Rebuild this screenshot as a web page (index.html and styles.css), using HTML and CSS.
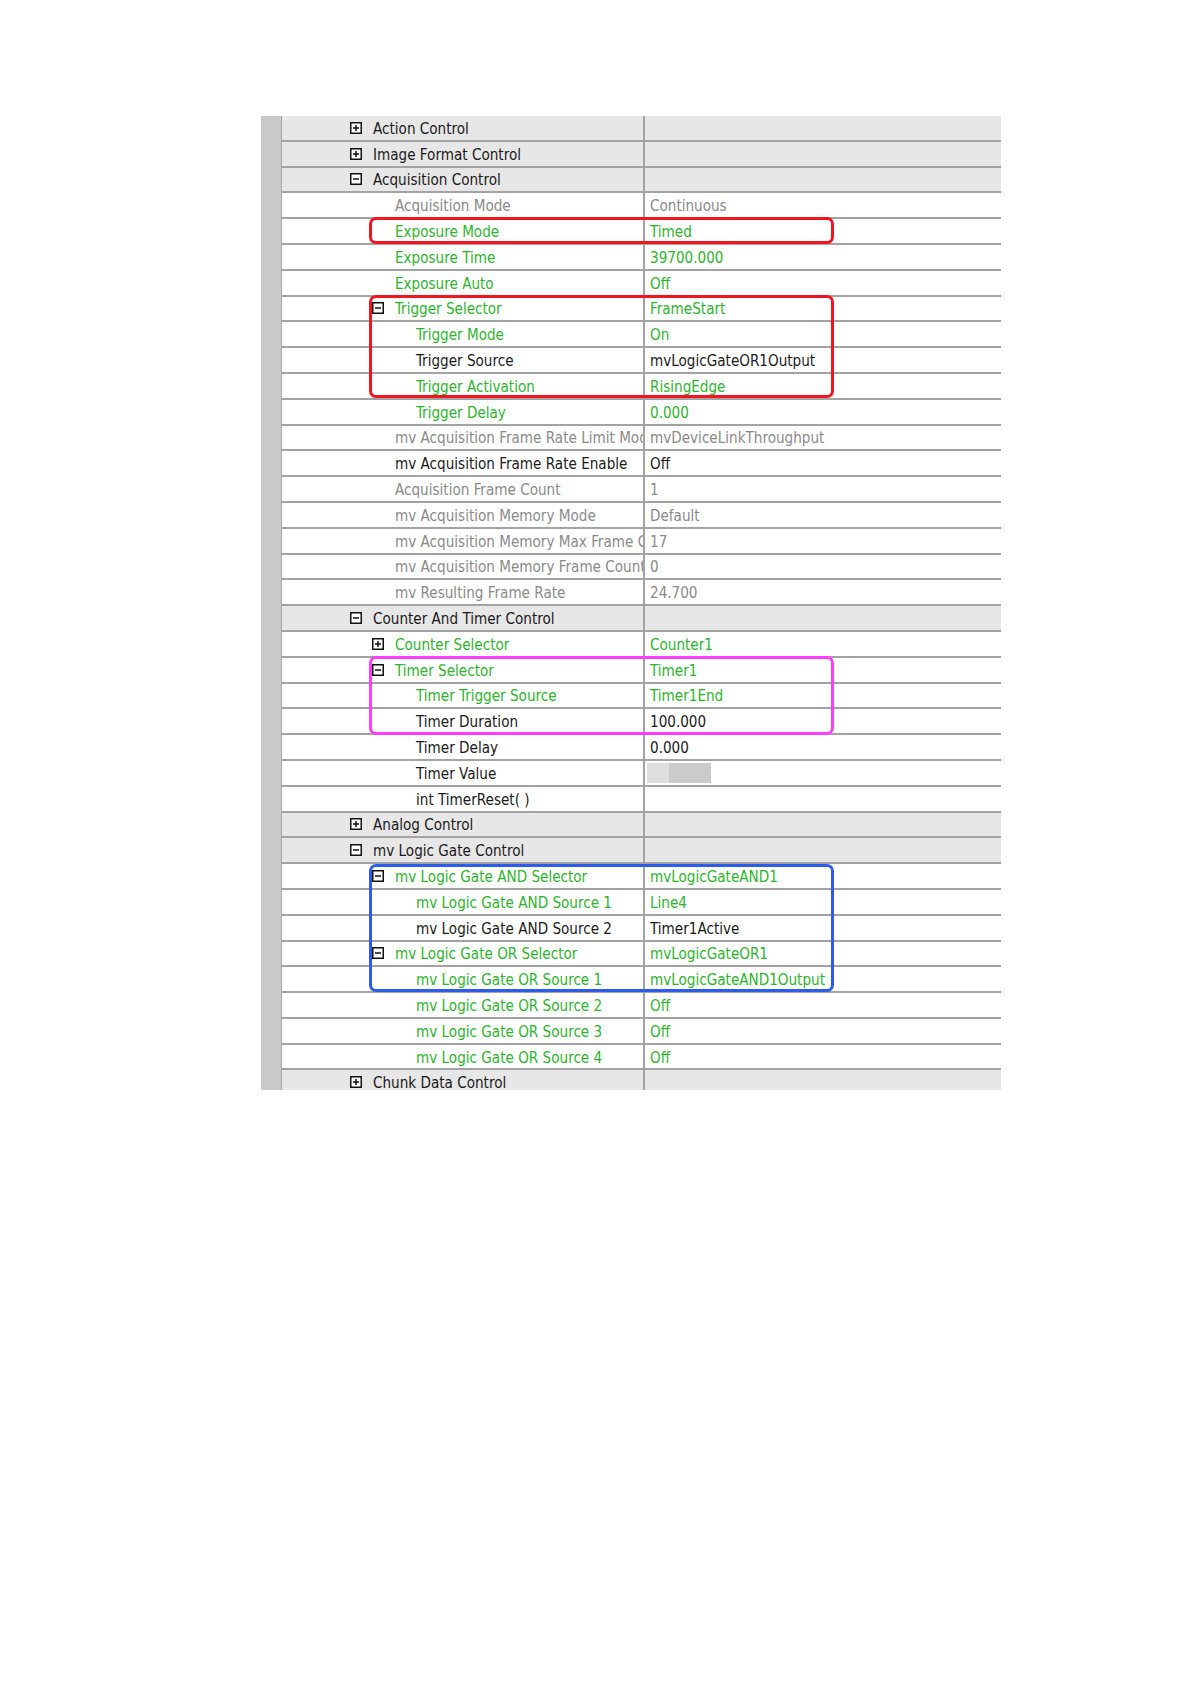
FILE: index.html
```html
<!DOCTYPE html>
<html>
<head>
<meta charset="utf-8">
<title>Property Grid</title>
<link rel="stylesheet" href="styles.css">
</head>
<body>
<div class="page">
  <div class="grid">
    <div class="gutter"></div>
    <div class="table">
      <div class="row group"><div class="name l0"><svg class="ico" viewBox="0 0 12 12"><rect x="0.75" y="0.75" width="10.5" height="10.5"/><path d="M3 6h6M6 3v6"/></svg><span>Action Control</span></div><div class="val"></div></div>
      <div class="row group"><div class="name l0"><svg class="ico" viewBox="0 0 12 12"><rect x="0.75" y="0.75" width="10.5" height="10.5"/><path d="M3 6h6M6 3v6"/></svg><span>Image Format Control</span></div><div class="val"></div></div>
      <div class="row group"><div class="name l0"><svg class="ico" viewBox="0 0 12 12"><rect x="0.75" y="0.75" width="10.5" height="10.5"/><path d="M3 6h6"/></svg><span>Acquisition Control</span></div><div class="val"></div></div>
      <div class="row gray"><div class="name l1">Acquisition Mode</div><div class="val">Continuous</div></div>
      <div class="row green"><div class="name l1">Exposure Mode</div><div class="val">Timed</div></div>
      <div class="row green"><div class="name l1">Exposure Time</div><div class="val">39700.000</div></div>
      <div class="row green"><div class="name l1">Exposure Auto</div><div class="val">Off</div></div>
      <div class="row green"><div class="name l1i"><svg class="ico" viewBox="0 0 12 12"><rect x="0.75" y="0.75" width="10.5" height="10.5"/><path d="M3 6h6"/></svg><span>Trigger Selector</span></div><div class="val">FrameStart</div></div>
      <div class="row green"><div class="name l2">Trigger Mode</div><div class="val">On</div></div>
      <div class="row black"><div class="name l2">Trigger Source</div><div class="val">mvLogicGateOR1Output</div></div>
      <div class="row green"><div class="name l2">Trigger Activation</div><div class="val">RisingEdge</div></div>
      <div class="row green"><div class="name l2">Trigger Delay</div><div class="val">0.000</div></div>
      <div class="row gray"><div class="name l1">mv Acquisition Frame Rate Limit Mode</div><div class="val">mvDeviceLinkThroughput</div></div>
      <div class="row black"><div class="name l1">mv Acquisition Frame Rate Enable</div><div class="val">Off</div></div>
      <div class="row gray"><div class="name l1">Acquisition Frame Count</div><div class="val">1</div></div>
      <div class="row gray"><div class="name l1">mv Acquisition Memory Mode</div><div class="val">Default</div></div>
      <div class="row gray"><div class="name l1">mv Acquisition Memory Max Frame Count</div><div class="val">17</div></div>
      <div class="row gray"><div class="name l1">mv Acquisition Memory Frame Count</div><div class="val">0</div></div>
      <div class="row gray"><div class="name l1">mv Resulting Frame Rate</div><div class="val">24.700</div></div>
      <div class="row group"><div class="name l0"><svg class="ico" viewBox="0 0 12 12"><rect x="0.75" y="0.75" width="10.5" height="10.5"/><path d="M3 6h6"/></svg><span>Counter And Timer Control</span></div><div class="val"></div></div>
      <div class="row green"><div class="name l1i"><svg class="ico" viewBox="0 0 12 12"><rect x="0.75" y="0.75" width="10.5" height="10.5"/><path d="M3 6h6M6 3v6"/></svg><span>Counter Selector</span></div><div class="val">Counter1</div></div>
      <div class="row green"><div class="name l1i"><svg class="ico" viewBox="0 0 12 12"><rect x="0.75" y="0.75" width="10.5" height="10.5"/><path d="M3 6h6"/></svg><span>Timer Selector</span></div><div class="val">Timer1</div></div>
      <div class="row green"><div class="name l2">Timer Trigger Source</div><div class="val">Timer1End</div></div>
      <div class="row black"><div class="name l2">Timer Duration</div><div class="val">100.000</div></div>
      <div class="row black"><div class="name l2">Timer Delay</div><div class="val">0.000</div></div>
      <div class="row black"><div class="name l2">Timer Value</div><div class="val"><span class="blank"><span class="blank-a"></span><span class="blank-b"></span></span></div></div>
      <div class="row black"><div class="name l2">int TimerReset( )</div><div class="val"></div></div>
      <div class="row group"><div class="name l0"><svg class="ico" viewBox="0 0 12 12"><rect x="0.75" y="0.75" width="10.5" height="10.5"/><path d="M3 6h6M6 3v6"/></svg><span>Analog Control</span></div><div class="val"></div></div>
      <div class="row group"><div class="name l0"><svg class="ico" viewBox="0 0 12 12"><rect x="0.75" y="0.75" width="10.5" height="10.5"/><path d="M3 6h6"/></svg><span>mv Logic Gate Control</span></div><div class="val"></div></div>
      <div class="row green"><div class="name l1i"><svg class="ico" viewBox="0 0 12 12"><rect x="0.75" y="0.75" width="10.5" height="10.5"/><path d="M3 6h6"/></svg><span>mv Logic Gate AND Selector</span></div><div class="val">mvLogicGateAND1</div></div>
      <div class="row green"><div class="name l2">mv Logic Gate AND Source 1</div><div class="val">Line4</div></div>
      <div class="row black"><div class="name l2">mv Logic Gate AND Source 2</div><div class="val">Timer1Active</div></div>
      <div class="row green"><div class="name l1i"><svg class="ico" viewBox="0 0 12 12"><rect x="0.75" y="0.75" width="10.5" height="10.5"/><path d="M3 6h6"/></svg><span>mv Logic Gate OR Selector</span></div><div class="val">mvLogicGateOR1</div></div>
      <div class="row green"><div class="name l2">mv Logic Gate OR Source 1</div><div class="val">mvLogicGateAND1Output</div></div>
      <div class="row green"><div class="name l2">mv Logic Gate OR Source 2</div><div class="val">Off</div></div>
      <div class="row green"><div class="name l2">mv Logic Gate OR Source 3</div><div class="val">Off</div></div>
      <div class="row green"><div class="name l2">mv Logic Gate OR Source 4</div><div class="val">Off</div></div>
      <div class="row group"><div class="name l0"><svg class="ico" viewBox="0 0 12 12"><rect x="0.75" y="0.75" width="10.5" height="10.5"/><path d="M3 6h6M6 3v6"/></svg><span>Chunk Data Control</span></div><div class="val"></div></div>
    </div>
    <div class="mark red box-exposure"></div>
    <div class="mark red box-trigger"></div>
    <div class="mark magenta box-timer"></div>
    <div class="mark blue box-logic"></div>
  </div>
</div>
</body>
</html>
```
FILE: styles.css
```css
html, body {
  margin: 0;
  padding: 0;
  background: #ffffff;
}

.page {
  padding-top: 116px;
  padding-left: 261px;
}

.grid {
  position: relative;
  width: 740px;
  height: 974px;
  overflow: hidden;
  display: flex;
  font-family: "DejaVu Sans Condensed", "DejaVu Sans", sans-serif;
  font-size: 15.1px;
}

.gutter {
  width: 20px;
  flex: none;
  background: #c9c9c9;
  border-right: 1px solid #a9a9a9;
}

.table {
  flex: 1;
  display: flex;
  flex-direction: column;
}

.row {
  flex: none;
  height: 25.8px;
  box-sizing: border-box;
  border-bottom: 2px solid #a3a3a3;
  display: flex;
  background: #ffffff;
}

.row.group {
  background: #e7e7e7;
  color: #1a1a1a;
}

.row.green { color: #2db42d; }
.row.gray { color: #8a8a8a; }
.row.black { color: #1a1a1a; }

.name {
  width: 363px;
  flex: none;
  box-sizing: border-box;
  display: flex;
  align-items: center;
  padding-top: 2px;
  white-space: nowrap;
  overflow: hidden;
  border-right: 2px solid #a3a3a3;
}

.name.l0 { padding-left: 68px; }
.name.l1 { padding-left: 113px; }
.name.l1i { padding-left: 90px; }
.name.l2 { padding-left: 134px; }

.ico {
  width: 12px;
  height: 12px;
  flex: none;
  margin-right: 11px;
  margin-top: -2px;
}

.ico rect {
  fill: #ffffff;
  stroke: #111111;
  stroke-width: 1.5;
}

.ico path {
  stroke: #111111;
  stroke-width: 1.5;
  fill: none;
}

.val {
  flex: 1;
  display: flex;
  align-items: center;
  padding-left: 5px;
  padding-top: 2px;
  white-space: nowrap;
  overflow: hidden;
}

.blank {
  display: flex;
  height: 20px;
  margin-left: -3px;
  margin-top: -2px;
}

.blank-a {
  width: 22px;
  background: #dedede;
}

.blank-b {
  width: 42px;
  background: #cbcbcb;
}

.mark {
  position: absolute;
  left: 108px;
  width: 465px;
  box-sizing: border-box;
  border-radius: 7px;
  border: 3px solid;
  pointer-events: none;
}

.mark.red { border-color: #f2141e; }
.mark.magenta { border-color: #ff3cff; }
.mark.blue { border-color: #2c5cea; }

.box-exposure { top: 101px; height: 26.5px; }
.box-trigger { top: 178.8px; height: 103.5px; }
.box-timer { top: 540px; height: 78.5px; }
.box-logic { top: 747.5px; height: 128px; }
```
